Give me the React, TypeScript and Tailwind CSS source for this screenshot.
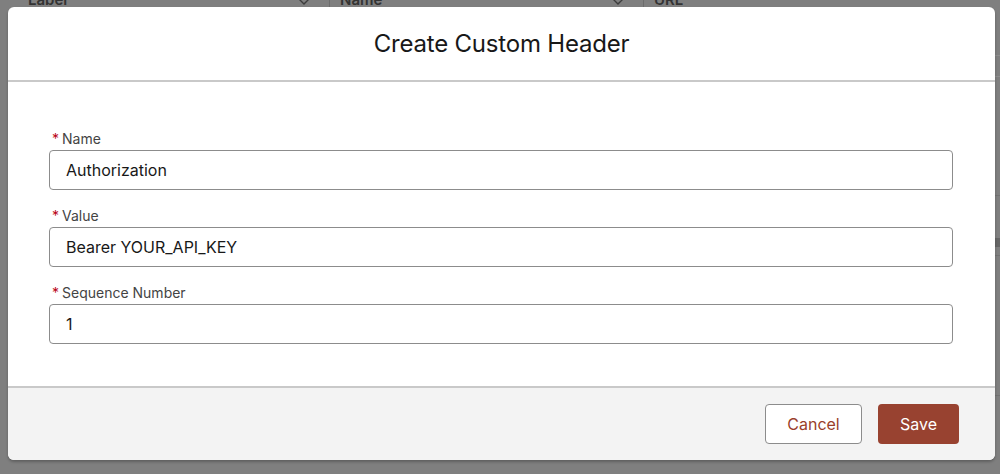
import React from "react"

const fields = [
  { label: "Name", value: "Authorization" },
  { label: "Value", value: "Bearer YOUR_API_KEY" },
  { label: "Sequence Number", value: "1" },
]

function Chevron() {
  return (
    <svg width="18" height="10" viewBox="0 0 18 10" fill="none" className="text-[#3c3c3c]">
      <path d="M1 1l8 8 8-8" stroke="currentColor" strokeWidth="1.4" />
    </svg>
  )
}

export default function App() {
  return (
    <div
      className="relative h-[474px] w-[1000px] overflow-hidden bg-[#7f7f7f]"
      style={{ fontFamily: "Inter, 'Noto Sans', sans-serif" }}
    >
      {/* table header behind the backdrop */}
      <div className="-mt-[12px] flex h-[24px] items-center text-[15px] font-semibold text-[#333]">
        <div className="flex w-[329px] items-center justify-between pl-[28px] pr-[16px]">
          <span>Label</span>
          <Chevron />
        </div>
        <div className="flex h-full w-[314px] items-center justify-between border-l border-[#6c6c6c] pl-[10px] pr-[16px]">
          <span>Name</span>
          <Chevron />
        </div>
        <div className="flex h-full flex-1 items-center border-l border-[#6c6c6c] pl-[10px]">
          <span>URL</span>
        </div>
      </div>
      <div className="absolute right-0 top-[55px] h-px w-[6px] bg-[#8e8e8e]" />
      <div className="absolute right-0 top-[76px] h-px w-[6px] bg-[#8e8e8e]" />
      <div className="absolute right-0 top-[195px] h-px w-[6px] bg-[#727272]" />
      <div className="absolute right-0 top-[238px] h-[9px] w-[6px] bg-[#666]" />
      <div className="absolute right-0 top-[255px] h-px w-[6px] bg-[#727272]" />
      <div className="absolute right-0 top-[395px] h-px w-[6px] bg-[#727272]" />

      {/* modal */}
      <div className="absolute left-[8px] top-[7px] flex w-[987px] flex-col overflow-hidden rounded-[6px] bg-white shadow-[0_2px_3px_rgba(0,0,0,0.25)]">
        <div className="flex h-[75px] items-center justify-center border-b-2 border-[#c9c9c9]">
          <h2 className="text-[24px] font-normal tracking-[-0.2px] text-[#181818]">Create Custom Header</h2>
        </div>
        <div className="flex flex-col gap-[15px] pb-[42px] pl-[41px] pr-[42px] pt-[46px]">
          {fields.map((f) => (
            <div key={f.label} className="flex flex-col gap-[2px]">
              <label className="flex h-[20px] items-center text-[14px] text-[#444]">
                <span className="mr-[3px] ml-[3px] text-[#ba0517]">*</span>
                {f.label}
              </label>
              <div className="flex h-[40px] items-center rounded-[4px] border border-[#8c8c8c] px-[16px] text-[16px] text-[#181818]">
                {f.value}
              </div>
            </div>
          ))}
        </div>
        <div className="flex h-[74px] items-center justify-end gap-[16px] border-t-2 border-[#c9c9c9] bg-[#f3f3f3] pr-[36px]">
          <button className="h-[40px] w-[97px] rounded-[4px] border border-[#8c8c8c] bg-white text-[16px] text-[#9a3f2b]">
            Cancel
          </button>
          <button className="h-[40px] w-[81px] rounded-[4px] bg-[#984230] text-[16px] text-white">
            Save
          </button>
        </div>
      </div>
    </div>
  )
}
